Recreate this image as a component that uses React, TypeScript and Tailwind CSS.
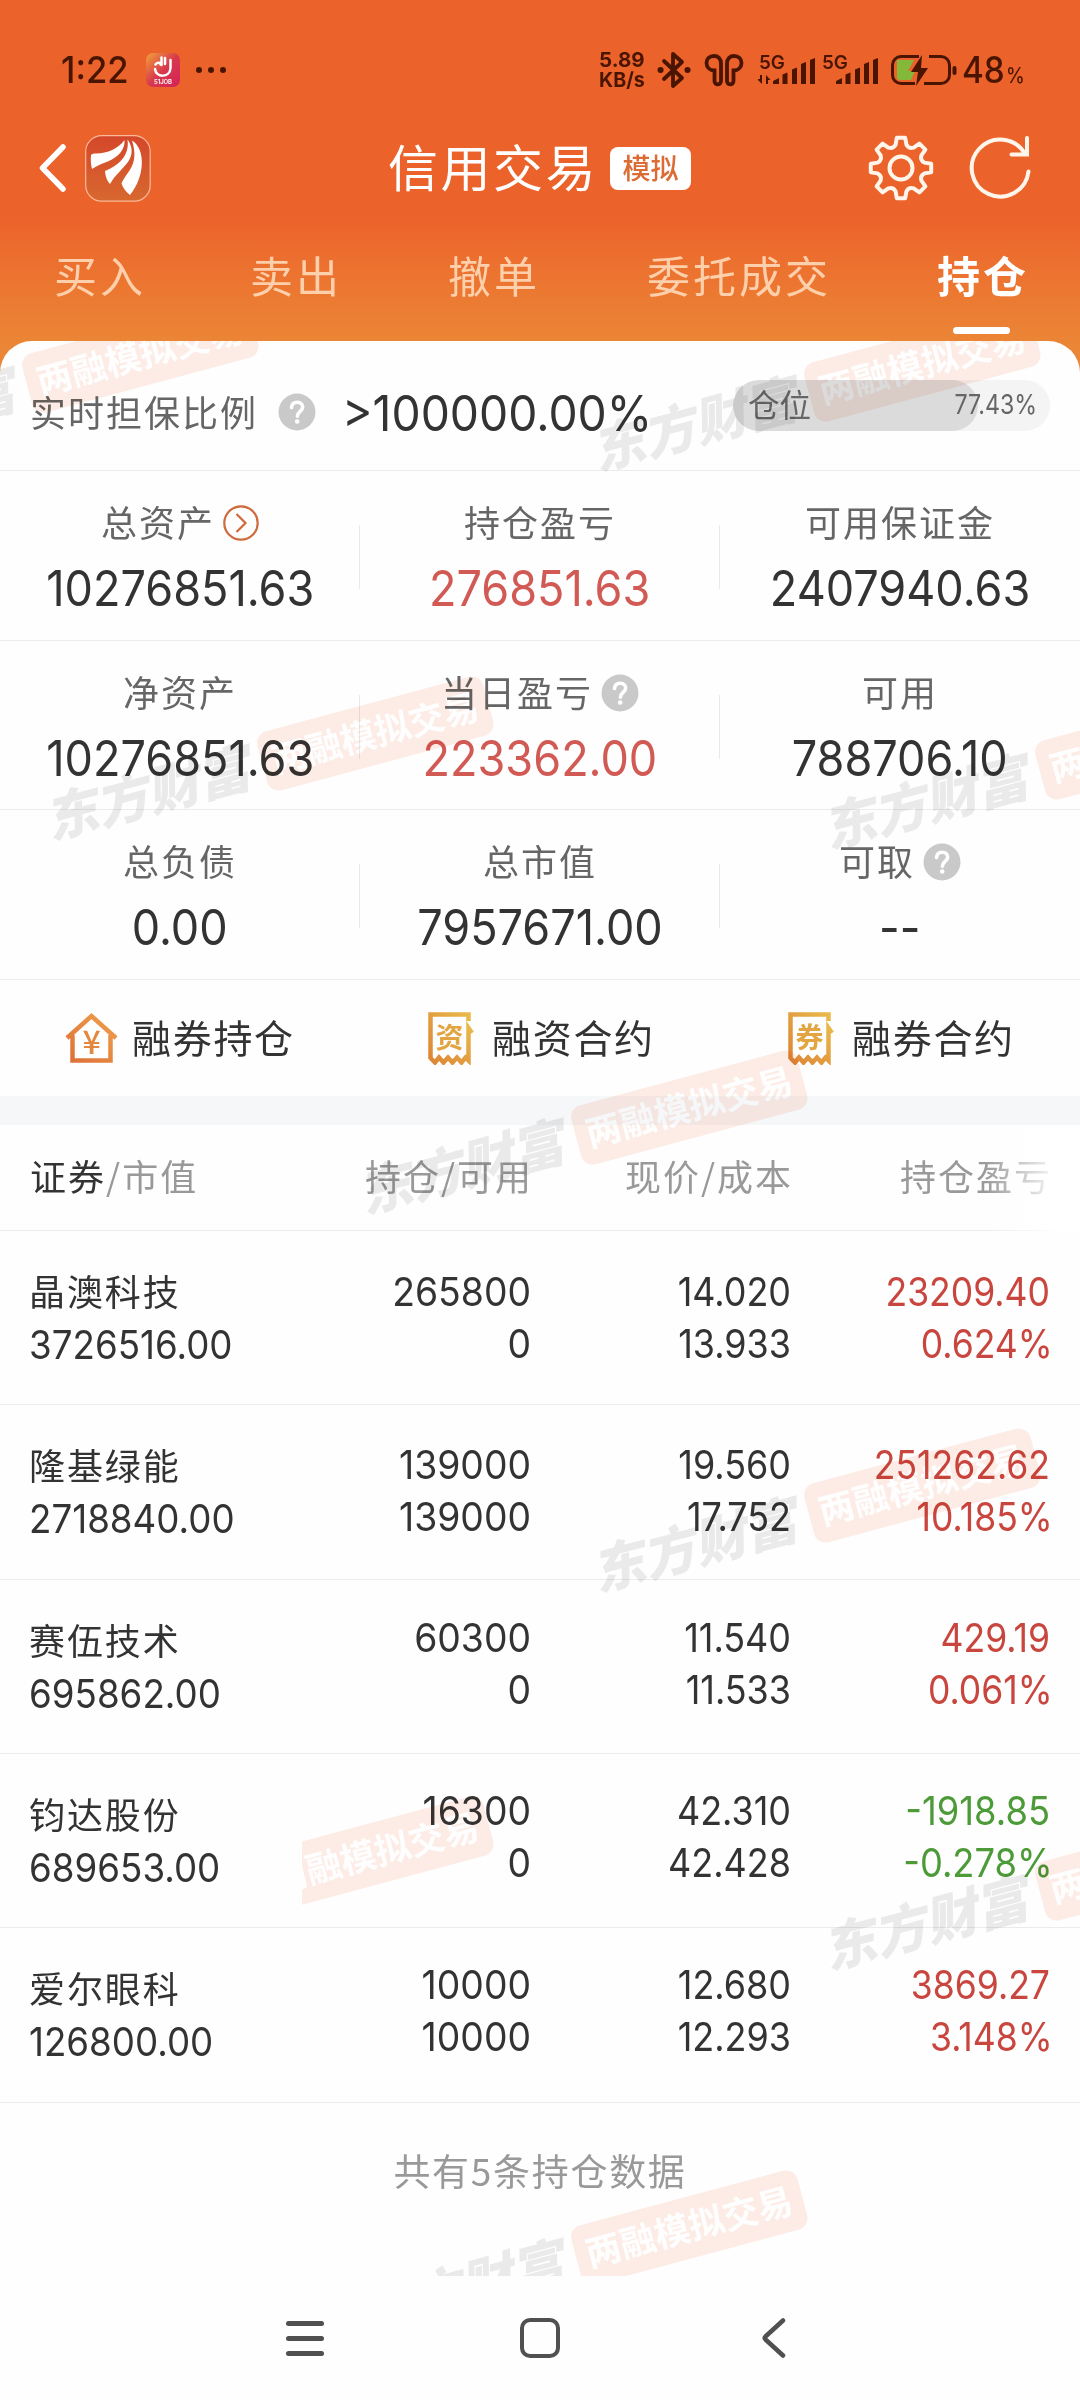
import React from 'react';
import clsx from 'clsx';

const INK = '#4a1500';

interface Stat {
    label: string;
    value: string;
    red?: boolean;
    icon?: 'help' | 'arrow';
}

interface Holding {
    name: string;
    marketValue: string;
    amount: string;
    available: string;
    price: string;
    cost: string;
    profit: string;
    rate: string;
}

const tabs = [
    { label: '买入', className: 'ml-[54px]' },
    { label: '卖出', className: 'ml-[104px]' },
    { label: '撤单', className: 'ml-[106px]' },
    { label: '委托成交', className: 'ml-[107px]' },
];

const stats: Stat[][] = [
    [
        { label: '总资产', value: '10276851.63', icon: 'arrow' },
        { label: '持仓盈亏', value: '276851.63', red: true },
        { label: '可用保证金', value: '2407940.63' },
    ],
    [
        { label: '净资产', value: '10276851.63' },
        { label: '当日盈亏', value: '223362.00', red: true, icon: 'help' },
        { label: '可用', value: '788706.10' },
    ],
    [
        { label: '总负债', value: '0.00' },
        { label: '总市值', value: '7957671.00' },
        { label: '可取', value: '--', icon: 'help' },
    ],
];

const holdings: Holding[] = [
    { name: '晶澳科技', marketValue: '3726516.00', amount: '265800', available: '0', price: '14.020', cost: '13.933', profit: '23209.40', rate: '0.624%' },
    { name: '隆基绿能', marketValue: '2718840.00', amount: '139000', available: '139000', price: '19.560', cost: '17.752', profit: '251262.62', rate: '10.185%' },
    { name: '赛伍技术', marketValue: '695862.00', amount: '60300', available: '0', price: '11.540', cost: '11.533', profit: '429.19', rate: '0.061%' },
    { name: '钧达股份', marketValue: '689653.00', amount: '16300', available: '0', price: '42.310', cost: '42.428', profit: '-1918.85', rate: '-0.278%' },
    { name: '爱尔眼科', marketValue: '126800.00', amount: '10000', available: '10000', price: '12.680', cost: '12.293', profit: '3869.27', rate: '3.148%' },
];

// Watermark centres, measured from the top left corner of the sheet
const marks = [
    { x: 32, y: 43 },
    { x: 814, y: 52 },
    { x: 267, y: 421 },
    { x: 1045, y: 430 },
    { x: 581, y: 795 },
    { x: 814, y: 1173 },
    { x: 1045, y: 1551 },
    { x: 581, y: 1915 },
];

function Watermark({ x, y }: { x: number; y: number }) {
    return (
        <div
            className="absolute flex h-[60px] w-[458px] -translate-x-1/2 -translate-y-1/2 -rotate-15 items-center justify-between whitespace-nowrap"
            style={{ left: x, top: y }}
        >
            <span className="-mt-2 text-[52.500px] leading-[60px] font-black text-[#ebebeb] italic">东方财富</span>
            <span className="flex h-[61px] w-[234px] items-center justify-center rounded-[12px] bg-[#fdede6] pb-1 text-[35.500px] leading-none font-bold text-white">
                两融模拟交易
            </span>
        </div>
    );
}

function HelpIcon() {
    return (
        <svg width="38" height="38" viewBox="0 0 38 38" fill="none">
            <circle cx="19" cy="19" r="18.5" fill="#c9c9c9" />
            <path d="M13.500 14.500c.3-3.400 2.600-5.300 5.700-5.300 3.200 0 5.500 1.900 5.500 4.800 0 4.200-5.300 4.600-5.300 9.200" stroke="#fff" strokeWidth="3.600" strokeLinecap="round" />
            <circle cx="19.200" cy="28.500" r="2.300" fill="#fff" />
        </svg>
    );
}

function ArrowIcon() {
    return (
        <svg width="36" height="36" viewBox="0 0 36 36" fill="none" stroke="#cf6a3c" strokeWidth="2.200">
            <circle cx="18" cy="18" r="16.700" />
            <path d="M13.500 9l9 9-9 9" />
        </svg>
    );
}

function Signal({ data }: { data?: boolean }) {
    return (
        <svg width="58" height="32" viewBox="0 0 58 32" fill={INK}>
            <text x="1" y="15" fontSize="19" fontWeight="600" fontFamily="Inter" textLength="26" lengthAdjust="spacingAndGlyphs">5G</text>
            {data && <path d="M4 21v9l-5-5h3v-4zM8 30v-9l4.500 5H10v4z" />}
            <path d="M15 30v-3l6-3v6zM24.500 20.500l5-2V30h-5zM34 15.500l5-2V30h-5zM43 10l5-2v22h-5zM52 6l5-2v26h-5z" />
        </svg>
    );
}

function StatusBar() {
    return (
        <div className="flex h-[140px] items-center text-[#4a1500]">
            <span className="ml-[61px] w-[85px] origin-left scale-x-[0.95] font-['Inter'] text-[36.500px] font-medium">1:22</span>
            <svg width="34" height="34" viewBox="0 0 34 34" fill="none">
                <defs>
                    <linearGradient id="job" x1="0" y1="0" x2="1" y2="1">
                        <stop offset="0" stopColor="#f2a33a" />
                        <stop offset="0.500" stopColor="#d83a4c" />
                        <stop offset="1" stopColor="#d42058" />
                    </linearGradient>
                </defs>
                <rect width="34" height="34" rx="7" fill="url(#job)" />
                <path d="M9 16c1 9 15 9 15.500-1V7M15.500 4.500V12M19 5v6M9.500 11.500c2-2.500 5-2 5 0" stroke="#fff" strokeWidth="2.500" strokeLinecap="round" />
                <text x="8" y="30.500" fontSize="6" fontWeight="600" fill="#fff" fontFamily="Inter" textLength="18">51JOB</text>
            </svg>
            <div className="ml-4 flex gap-[6px]">
                <i className="size-[6px] rounded-full bg-[#4a1500]" />
                <i className="size-[6px] rounded-full bg-[#4a1500]" />
                <i className="size-[6px] rounded-full bg-[#4a1500]" />
            </div>
            <div className="ml-auto flex w-[481px] items-center">
                <div className="w-[58px] font-['Inter'] text-[20.500px] leading-[20px] font-bold">
                    <div className="origin-left">5.89</div>
                    <div className="origin-left scale-x-[0.96]">KB/s</div>
                </div>
                <svg width="34" height="38" viewBox="0 0 34 38" fill="none" stroke={INK} strokeWidth="3.800" strokeLinecap="round" strokeLinejoin="round">
                    <path d="M7 10l18 17-9 8V3l9 8L7 28" />
                    <path d="M3.500 19h.1M30.500 19h.1" strokeWidth="6" />
                </svg>
                <svg className="ml-[13px]" width="40" height="34" viewBox="0 0 40 34" fill="none" stroke={INK} strokeWidth="3.800">
                    <path d="M17 28V10.500C17 5.500 14 3 10 3 5.500 3 2.500 6 2.500 10c0 4.500 3.500 7.500 8 7.500V28c0 4.500 6.500 4.500 6.500 0z" />
                    <path d="M23 28V10.500C23 5.500 26 3 30 3c4.500 0 7.500 3 7.500 7 0 4.500-3.500 7.500-8 7.500V28c0 4.500-6.500 4.500-6.500 0z" />
                </svg>
                <div className="ml-[14px] flex gap-[5px]">
                    <Signal data />
                    <Signal />
                </div>
                <svg className="ml-[12px]" width="66" height="34" viewBox="0 0 66 34" fill="none">
                    <path d="M6 7h17l-6 11h7l-4 9H9a3 3 0 01-3-3z" fill="#84b838" />
                    <path d="M28 3.500H10a8.500 8.500 0 00-8.500 8.500v10A8.500 8.500 0 0010 30.500h14M38 3.500h12a8.500 8.500 0 018.500 8.500v10a8.500 8.500 0 01-8.500 8.500H33" stroke={INK} strokeWidth="3" />
                    <path d="M31 2L20 19h7l-2 14 12-18h-7z" fill={INK} />
                    <rect x="61.500" y="13" width="4" height="9" rx="2" fill={INK} />
                </svg>
                <span className="ml-[5px] font-['Inter'] text-[37px] whitespace-nowrap">
                    <span className="inline-block w-[44px] origin-left scale-x-[0.9] font-medium">48</span>
                    <span className="inline-block origin-left scale-x-[0.9] text-[21px] font-medium">%</span>
                </span>
            </div>
        </div>
    );
}

// Outline of the eight-tooth cog, centred on 0,0
function gearPath() {
    const at = (deg: number, r: number) => {
        const a = ((deg - 90) * Math.PI) / 180;
        return `${(Math.cos(a) * r).toFixed(1)} ${(Math.sin(a) * r).toFixed(1)}`;
    };
    let d = '';
    for (let i = 0; i < 8; i++) {
        const a = i * 45;
        d += `${i ? 'L' : 'M'}${at(a - 8, 30.5)}L${at(a + 8, 30.5)}L${at(a + 13, 24)}Q${at(a + 22.5, 20.5)} ${at(a + 32, 24)}`;
    }
    return d + 'Z';
}

function TitleBar() {
    return (
        <div className="flex h-[56px] items-center text-white">
            <svg className="ml-[38px]" width="30" height="50" viewBox="0 0 30 50" fill="none" stroke="#fff" strokeWidth="5.500" strokeLinecap="round" strokeLinejoin="round">
                <path d="M25 4L4.500 25 25 46" />
            </svg>
            <svg className="ml-[17px]" width="66" height="67" viewBox="0 0 66 67">
                <defs>
                    <linearGradient id="logo" x1="0" y1="0" x2="0" y2="1">
                        <stop offset="0" stopColor="#d4472a" />
                        <stop offset="1" stopColor="#d8682f" />
                    </linearGradient>
                </defs>
                <rect x="0.700" y="0.700" width="64.500" height="65.500" rx="16" fill="url(#logo)" stroke="#f9b99a" strokeWidth="1.200" />
                <g fill="#fff">
                    <path d="M6 20c1-1.500 3-1.500 5-1.500C23 18 33 14 39.500 5 40 11 37 17 32 21 25 27 16 28 7 34 6 30 5.500 25 6 20z" />
                    <path d="M42.500 4.500C48 12 48 20 43 27 36 36 31 39 25 49c-3-3.500-4.500-7-5-13C32 31 45 22 42.500 4.500z" />
                    <path d="M47 5.500C61 14 60 42 45 60c-4-3-7-7-8.500-11.500C41 37 55 31 47 5.500z" />
                </g>
            </svg>
            <h1 className="-mt-[7px] ml-[237px] text-[50px] leading-[56px] tracking-[2.500px]">信用交易</h1>
            <span className="ml-[12px] flex h-[43px] w-[81px] items-center justify-center rounded-[8px] bg-white pb-[3px] text-[28px] leading-none font-medium text-[#dc6c35]">模拟</span>
            <svg className="ml-auto" width="68" height="68" viewBox="-34 -34 68 68" fill="none" stroke="#fff5ea" strokeWidth="4" strokeLinejoin="round">
                <path d={gearPath()} />
                <circle r="11.500" />
            </svg>
            <svg className="mr-[46px] ml-[31px]" width="68" height="68" viewBox="-34 -34 68 68" fill="none" stroke="#fff5ea" strokeWidth="4" strokeLinecap="round">
                <path d="M28.500 3.500A28.500 28.500 0 1 1 25-14" />
                <path d="M27-30v16.500H11.500" />
            </svg>
        </div>
    );
}

function Stats() {
    return (
        <>
            {stats.map((row, i) => (
                <div key={i} className="grid h-[169.600px] grid-cols-3 border-t border-[#ebebeb]">
                    {row.map((s, j) => (
                        <div key={s.label} className="relative flex flex-col items-center pt-[28px]">
                            <div className="flex h-11 items-center gap-[8px] text-[36px] leading-[44px] tracking-[2px] text-[#666]">
                                {s.label}
                                {s.icon && <span className="pt-[4px]">{s.icon === 'help' ? <HelpIcon /> : <ArrowIcon />}</span>}
                            </div>
                            <span className={clsx("mt-[23px] scale-x-[0.91] font-['Inter'] text-[49.500px] leading-[44px]", s.red ? 'text-[#d25a55]' : 'text-[#333]')}>
                                {s.value}
                            </span>
                            {j < 2 && <i className="absolute top-[54px] right-0 h-16 w-px bg-[#e9e9e9]" />}
                        </div>
                    ))}
                </div>
            ))}
        </>
    );
}

function Receipt({ char }: { char: string }) {
    return (
        <svg className="ml-[68px] w-[46px]" height="54" viewBox="0 0 46 54" fill="none">
            <defs>
                <linearGradient id="receipt" x1="1" y1="0" x2="0" y2="1">
                    <stop offset="0" stopColor="#e8b94a" />
                    <stop offset="1" stopColor="#dd8636" />
                </linearGradient>
            </defs>
            <path d="M40.500 10V3.500H2.500V48" stroke="url(#receipt)" strokeWidth="4.500" />
            <path d="M2.500 47l4.500 4.500 4-5 4.500 5 4.500-5 4.500 5 4.500-5 4.500 5 4-5 3 3V17l3.500 5" stroke="url(#receipt)" strokeWidth="4.500" />
            <text x="21.500" y="36.500" fontSize="28" fontWeight="700" textAnchor="middle" fill="#e2a542">{char}</text>
        </svg>
    );
}

function Actions() {
    const label = 'text-[39px] tracking-[1.700px] leading-[56px] -mt-1';
    return (
        <div className="grid h-[117px] grid-cols-3 border-t border-[#ebebeb] text-[#333]">
            <div className="flex items-center gap-[14px]">
                <svg className="ml-[65px]" width="53" height="52" viewBox="0 0 53 52" fill="none">
                    <defs>
                        <linearGradient id="house" x1="1" y1="0" x2="0" y2="1">
                            <stop offset="0" stopColor="#f0a04c" />
                            <stop offset="1" stopColor="#dc7038" />
                        </linearGradient>
                    </defs>
                    <path d="M2 26L26.500 4 51 26M7.500 23v25.500h38V23" stroke="url(#house)" strokeWidth="4.500" />
                    <text x="26.500" y="42" fontSize="32" fontWeight="500" textAnchor="middle" fill="#e4883f">¥</text>
                </svg>
                <span className={label}>融券持仓</span>
            </div>
            <div className="flex items-center gap-[18px]">
                <Receipt char="资" />
                <span className={label}>融资合约</span>
            </div>
            <div className="flex items-center gap-[18px]">
                <Receipt char="券" />
                <span className={label}>融券合约</span>
            </div>
        </div>
    );
}

// The number columns run on a slightly tighter pitch than the row lines
function Pair({ top, bottom, row, className }: { top: string; bottom: string; row: number; className?: string }) {
    return (
        <div
            className={clsx("flex origin-right flex-col items-end font-['Inter']", className)}
            style={{ marginTop: row * -1.2 }}
        >
            <span>{top}</span>
            <span className={bottom.endsWith('%') ? '-mr-[3px]' : undefined}>{bottom}</span>
        </div>
    );
}

function Holdings() {
    const cols = 'grid grid-cols-[302px_229px_260px_259px]';
    return (
        <div>
            <div className={clsx(cols, 'relative h-[106px] items-center border-b border-[#ebebeb] pb-1 text-[36px] tracking-[2px] text-[#999]')}>
                <span className="pl-[30px] whitespace-nowrap"><span className="text-[#333]">证券</span>/市值</span>
                <span className="-mr-[2px] text-right">持仓/可用</span>
                <span className="-mr-[2px] text-right">现价/成本</span>
                <span className="-mr-[2px] text-right">持仓盈亏</span>
                <i className="absolute top-0 right-0 -bottom-px w-[96px] bg-linear-to-r from-white/0 to-white to-80%" />
            </div>
            {holdings.map((h, i) => (
                <div key={h.name} className={clsx(cols, 'h-[174.400px] border-b border-[#ebebeb] pt-[35px] text-[39.500px] leading-[52px] text-[#333]')}>
                    <div className="flex flex-col pl-[29px] whitespace-nowrap">
                        <span className="-mt-[2px] text-[36px] tracking-[1.900px]">{h.name}</span>
                        <span className="mt-[3px] origin-left scale-x-[0.93] font-['Inter']">{h.marketValue}</span>
                    </div>
                    <Pair row={i} top={h.amount} bottom={h.available} className="scale-x-[0.945]" />
                    <Pair row={i} top={h.price} bottom={h.cost} className="scale-x-[0.91]" />
                    <Pair row={i} top={h.profit} bottom={h.rate} className={h.profit.startsWith('-') ? 'scale-x-[0.92] text-[#4d9a38]' : 'scale-x-[0.9] text-[#c8463e]'} />
                </div>
            ))}
        </div>
    );
}

export default function App() {
    return (
        <div lang="zh-CN" className="h-[2400px] w-[1080px] overflow-hidden bg-[#fefefe] font-['Noto_Sans_CJK_SC',sans-serif]">
            <header className="h-[380px] bg-linear-to-b from-[#ec622b] from-[215px] to-[#eb8636] to-[345px]">
                <StatusBar />
                <TitleBar />
                <nav className="flex h-[145px] pt-[48px] text-[43px] leading-[60px] tracking-[3px] text-[#fdcfab]">
                    {tabs.map((t) => (
                        <span key={t.label} className={t.className}>{t.label}</span>
                    ))}
                    <div className="ml-[106px] flex flex-col items-center font-bold text-white">
                        <span>持仓</span>
                        <i className="mt-[23px] mr-[3px] h-[7px] w-[57px] rounded-full bg-white" />
                    </div>
                </nav>
            </header>

            <main className="relative -mt-[39px] h-[1935px] rounded-t-[32px] bg-[#fefefe]">
                <div className="flex h-[129px] pt-[40px]">
                    <span className="ml-[30px] text-[36px] leading-[60px] tracking-[2px] text-[#666]">实时担保比例</span>
                    <div className="ml-[20px] pt-[12px]"><HelpIcon /></div>
                    <span className="ml-[26px] w-[391px] origin-left scale-x-[0.935] font-['Inter'] text-[49.500px] leading-[65px] whitespace-nowrap text-[#333]">&gt;100000.00%</span>
                    <div className="relative -mt-px flex h-[51px] w-[317px] items-center justify-between overflow-hidden rounded-full bg-[#f4f4f4] pr-[13px] pl-[15px] text-[#666]">
                        <i className="absolute inset-y-0 left-0 rounded-full bg-[#dbdbdb]" style={{ width: '77.43%' }} />
                        <span className="relative -mt-1 text-[31.500px] leading-none">仓位</span>
                        <span className="relative origin-right scale-x-[0.86] font-['Inter'] text-[27px]">77.43%</span>
                    </div>
                </div>
                <Stats />
                <Actions />
                <div className="h-[29px] bg-[#f6f7f9]" />
                <Holdings />
                <p className="mt-[42px] text-center text-[37px] leading-[50px] tracking-[1.700px] text-[#999]">共有5条持仓数据</p>

                <div className="pointer-events-none absolute inset-0 overflow-hidden rounded-t-[32px] mix-blend-multiply">
                    {marks.map((m, i) => <Watermark key={i} x={m.x} y={m.y} />)}
                    <div className="absolute top-[1400px] left-[302px] h-[300px] w-[300px] overflow-hidden">
                        <Watermark x={-35} y={141} />
                    </div>
                </div>
            </main>

            <footer className="flex h-[124px] items-center justify-between px-[286px]">
                <div className="flex w-[38px] flex-col gap-[10px]">
                    <i className="h-[5px] rounded-full bg-[#505050]" />
                    <i className="h-[5px] rounded-full bg-[#505050]" />
                    <i className="h-[5px] rounded-full bg-[#505050]" />
                </div>
                <i className="-ml-[6px] size-[40px] rounded-[10px] border-[4.500px] border-[#505050]" />
                <svg className="-mr-[1px]" width="34" height="42" viewBox="0 0 34 42" fill="none" stroke="#505050" strokeWidth="4.500" strokeLinecap="round" strokeLinejoin="round">
                    <path d="M22 3.500L4.500 19.500q-1.500 1.500 0 3L22 38.500" />
                </svg>
            </footer>
        </div>
    );
}
